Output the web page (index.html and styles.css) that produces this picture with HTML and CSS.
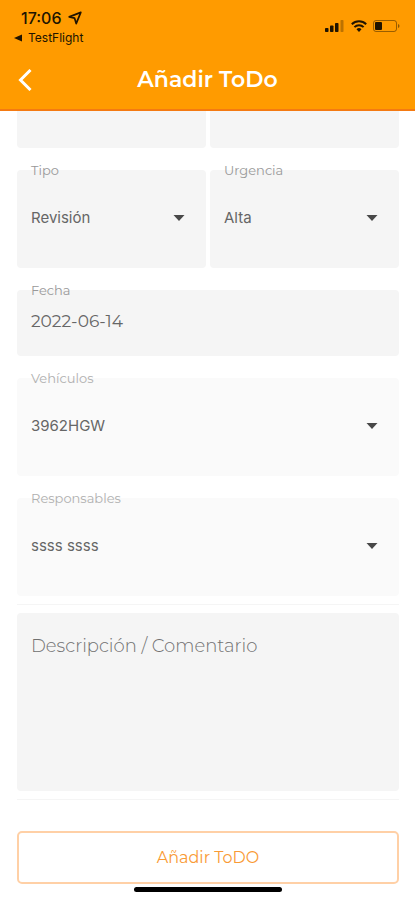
FILE: index.html
```html
<!DOCTYPE html>
<html lang="es">
<head>
<meta charset="utf-8">
<meta name="viewport" content="width=device-width, initial-scale=1">
<title>Añadir ToDo</title>
<link rel="stylesheet" href="styles.css">
</head>
<body>
<header class="header">
  <div class="status">
    <div class="status-left">
      <div class="clock">
        <span>17:06</span>
        <svg width="14" height="14" viewBox="0 0 14 14" aria-hidden="true"><path d="M12.8 1.4 1.200 5.900 6.600 7.200l1.600 5.400z" fill="none" stroke="#201400" stroke-width="1.7" stroke-linejoin="round"/></svg>
      </div>
      <a class="return" href="#">
        <svg width="8" height="8" viewBox="0 0 8 8" aria-hidden="true"><path d="M0 4 8 .5v7z" fill="#201400"/></svg>
        <span>TestFlight</span>
      </a>
    </div>
    <div class="status-right">
      <svg width="20" height="12" viewBox="0 0 20 12" aria-hidden="true"><g fill="#201400"><rect x="0" y="8" width="3.5" height="4" rx=".8"/><rect x="5" y="5.5" width="3.5" height="6.5" rx=".8"/><rect x="10" y="3" width="3.5" height="9" rx=".8"/><rect x="15.500" y="0" width="3" height="12" rx=".8" opacity=".3"/></g></svg>
      <svg width="16" height="12" viewBox="0 0 16 12" aria-hidden="true"><g fill="none" stroke="#201400" stroke-width="2"><path d="M.8 4.300a10.300 10.300 0 0 1 14.400 0"/><path d="M3.400 7.100a6.500 6.500 0 0 1 9.200 0"/></g><path d="M5.500 9.300a3.600 3.600 0 0 1 5 0L8 12z" fill="#201400"/></svg>
      <svg width="27" height="12" viewBox="0 0 27 12" aria-hidden="true"><rect x=".5" y=".5" width="23" height="11" rx="2.500" fill="none" stroke="#201400" opacity=".45"/><rect x="2" y="2" width="7" height="8" rx="1" fill="#201400"/><path d="M25 4c2 .8 2 3.200 0 4z" fill="#201400" opacity=".5"/></svg>
    </div>
  </div>
  <div class="nav">
    <button class="back" type="button" aria-label="Volver">
      <svg width="14" height="22" viewBox="0 0 14 22" aria-hidden="true"><path d="M12.500 1 2.500 11l10 10" fill="none" stroke="#fff" stroke-width="3"/></svg>
    </button>
    <h1 class="title">Añadir ToDo</h1>
  </div>
</header>

<form class="form">
  <div class="row">
    <input class="partial" type="text" aria-label="Nombre">
    <input class="partial" type="text" aria-label="Estado">
  </div>

  <div class="row">
    <div class="field">
      <label for="tipo">Tipo</label>
      <select id="tipo" class="control tall"><option>Revisión</option></select>
      <svg class="caret" width="12" height="6" viewBox="0 0 12 6" aria-hidden="true"><path d="M.5 0h11L6 6z"/></svg>
    </div>
    <div class="field">
      <label for="urgencia">Urgencia</label>
      <select id="urgencia" class="control tall"><option>Alta</option></select>
      <svg class="caret" width="12" height="6" viewBox="0 0 12 6" aria-hidden="true"><path d="M.5 0h11L6 6z"/></svg>
    </div>
  </div>

  <div class="field">
    <label for="fecha">Fecha</label>
    <input id="fecha" class="control date" type="text" value="2022-06-14">
  </div>

  <div class="field light">
    <label for="vehiculos">Vehículos</label>
    <select id="vehiculos" class="control tall"><option>3962HGW</option></select>
    <svg class="caret" width="12" height="6" viewBox="0 0 12 6" aria-hidden="true"><path d="M.5 0h11L6 6z"/></svg>
  </div>

  <div class="field light">
    <label for="responsables">Responsables</label>
    <select id="responsables" class="control tall"><option>ssss ssss</option></select>
    <svg class="caret" width="12" height="6" viewBox="0 0 12 6" aria-hidden="true"><path d="M.5 0h11L6 6z"/></svg>
  </div>

  <div class="comment">
    <textarea class="control" aria-label="Descripción / Comentario" placeholder="Descripción / Comentario"></textarea>
  </div>

  <button class="submit" type="submit">Añadir ToDO</button>
</form>
<div class="home-bar"></div>
</body>
</html>
```

FILE: styles.css
```css
* {
  box-sizing: border-box;
}

body {
  margin: 0;
  background: #fff;
  color: #666;
  font-family: Montserrat, Inter, "Liberation Sans", sans-serif;
}

button,
input,
select,
textarea {
  margin: 0;
  font: inherit;
  color: inherit;
}

.header {
  background: #ff9b00;
  border-bottom: 2px solid #f47a12;
}

.status {
  display: flex;
  justify-content: space-between;
  padding: 8px 15px 0 14px;
  color: #201400;
  font-family: Inter, "Liberation Sans", sans-serif;
}

.clock {
  display: flex;
  align-items: center;
  gap: 6px;
  padding-left: 7px;
  font-size: 16px;
  font-weight: 500;
  line-height: 20px;
}

.return {
  display: flex;
  align-items: center;
  gap: 6px;
  color: inherit;
  font-size: 12px;
  line-height: 20px;
  text-decoration: none;
}

.status-right {
  display: flex;
  gap: 6px;
  padding-top: 12px;
}

.nav {
  display: grid;
  grid-template-columns: 48px 1fr 48px;
  align-items: center;
  height: 61px;
  padding-top: 2px;
}

.back {
  display: flex;
  padding: 0 0 0 18px;
  border: 0;
  background: none;
}

.title {
  margin: 0;
  color: #fff;
  font-size: 22px;
  font-weight: 600;
  line-height: 28px;
  text-align: center;
}

.form {
  display: flex;
  flex-direction: column;
  gap: 22px;
  padding: 0 16px 0 17px;
}

.row {
  display: grid;
  grid-template-columns: 1fr 1fr;
  gap: 4px;
}

.partial {
  width: 100%;
  height: 37px;
  border: 0;
  border-radius: 0 0 4px 4px;
  background: #f5f5f5;
}

.field {
  position: relative;
}

.field label {
  position: absolute;
  top: -8px;
  left: 14px;
  color: #999;
  font-size: 13px;
  line-height: 16px;
}

.control {
  display: block;
  width: 100%;
  padding: 0 14px 4px;
  border: 0;
  border-radius: 4px;
  background: #f5f5f5;
  appearance: none;
}

.tall {
  height: 98px;
  font-family: Inter, "Liberation Sans", sans-serif;
  font-size: 15px;
}

.date {
  height: 66px;
  font-size: 17px;
}

.light .control {
  background: #fafafa;
}

.light label {
  color: #b0b0b0;
}

.caret {
  position: absolute;
  top: 45px;
  right: 21px;
  fill: #484848;
  pointer-events: none;
}

.comment {
  margin-top: -14px;
  padding: 8px 0;
  border: solid #f5f5f5;
  border-width: 1px 0;
}

.comment .control {
  height: 178px;
  padding: 21px 14px;
  font-size: 18px;
  font-weight: 300;
  line-height: 24px;
  resize: none;
}

.comment .control::placeholder {
  color: #707070;
  opacity: 1;
}

.submit {
  height: 53px;
  margin-top: 9px;
  border: 2px solid #ffd0a6;
  border-radius: 5px;
  background: #fff;
  color: #f99a35;
  font-size: 16px;
}

.home-bar {
  width: 148px;
  height: 5px;
  margin: 3px auto 0;
  border-radius: 3px;
  background: #000;
}
```
